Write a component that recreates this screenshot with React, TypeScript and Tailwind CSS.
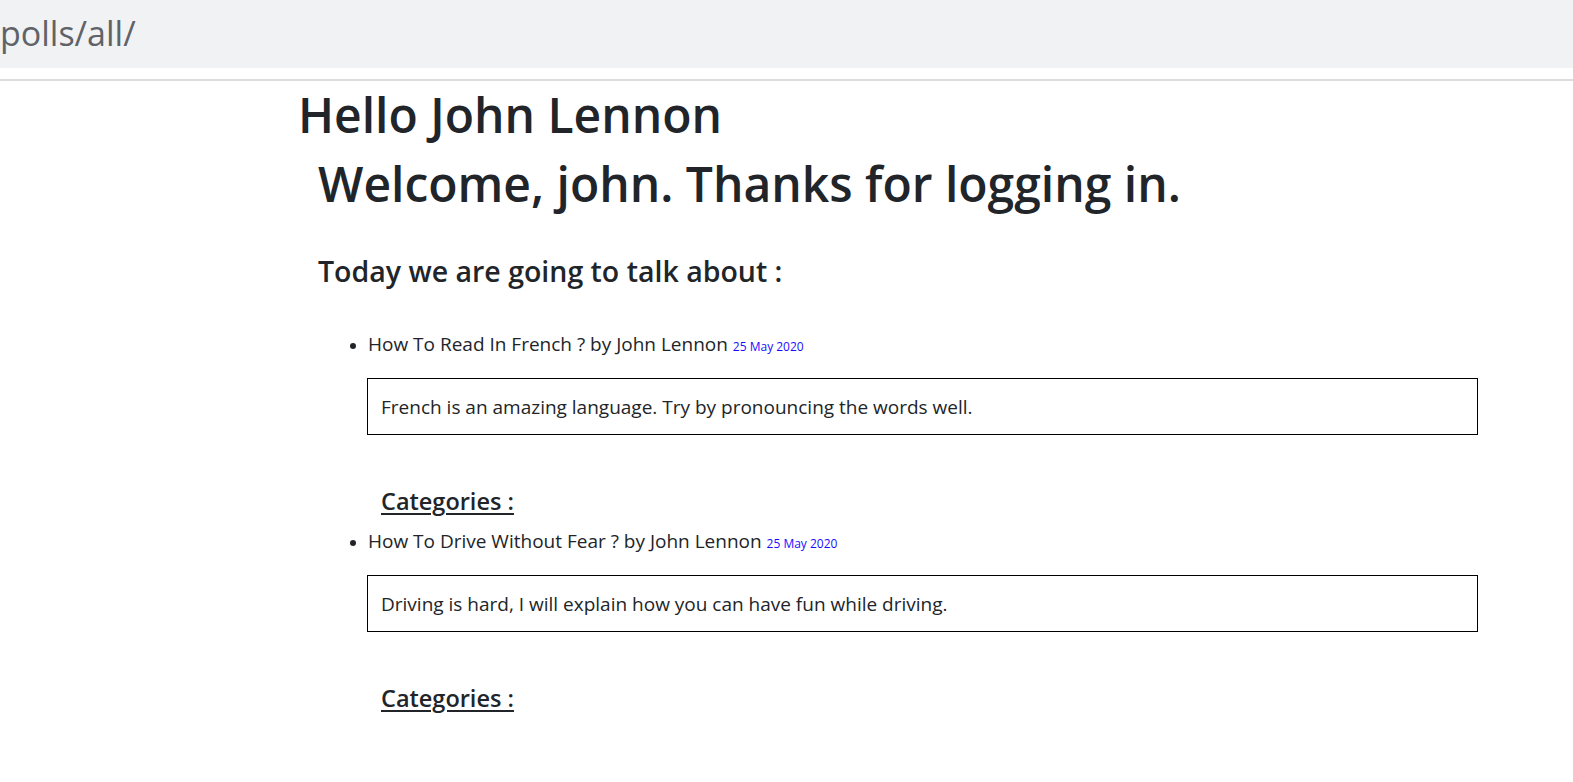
const posts = [
  {
    title: "How To Read In French ?",
    author: "John Lennon",
    date: "25 May 2020",
    body: "French is an amazing language. Try by pronouncing the words well.",
  },
  {
    title: "How To Drive Without Fear ?",
    author: "John Lennon",
    date: "25 May 2020",
    body: "Driving is hard, I will explain how you can have fun while driving.",
  },
];

export default function App() {
  return (
    <div className="min-h-[782px] bg-white text-[#212529] font-['Open_Sans',sans-serif]">
      {/* url bar */}
      <div className="border-b-2 border-[#dcdcdf] pb-[11px]">
        <div className="h-[68px] bg-[#f1f2f4] flex items-center">
          <span className="text-[34px] leading-none text-[#5f6368] -mt-[3px]">
            polls/all/
          </span>
        </div>
      </div>

      <div className="pl-[298px] pr-[95px]">
        <h1 className="mt-[5px] text-[48px] leading-[1.2] font-semibold">
          Hello John Lennon
        </h1>

        <div className="pl-[20px]">
          <h1 className="mt-[11px] text-[48px] leading-[1.2] font-semibold">
            Welcome, john. Thanks for logging in.
          </h1>
          <h4 className="mt-[42px] text-[28.5px] leading-[1.2] font-semibold">
            Today we are going to talk about :
          </h4>

          <ul className="mt-[43px] list-disc pl-[50px]">
            {posts.map((post, i) => (
              <li key={i} className={i > 0 ? "mt-[12px]" : ""}>
                <div className="text-[19px] leading-[27px]">
                  {post.title} by {post.author}{" "}
                  <span className="text-[12px] text-[#1a0dff]">{post.date}</span>
                </div>
                <div className="mt-[18px] -ml-px h-[57px] border border-black pl-[13px] pt-[15px] text-[19px] leading-[27px]">
                  {post.body}
                </div>
                <h5 className="mt-[52px] ml-[13px] text-[23.5px] leading-[1.2] font-semibold underline underline-offset-[3px] decoration-[2px]">
                  Categories :
                </h5>
              </li>
            ))}
          </ul>
        </div>
      </div>
    </div>
  );
}
